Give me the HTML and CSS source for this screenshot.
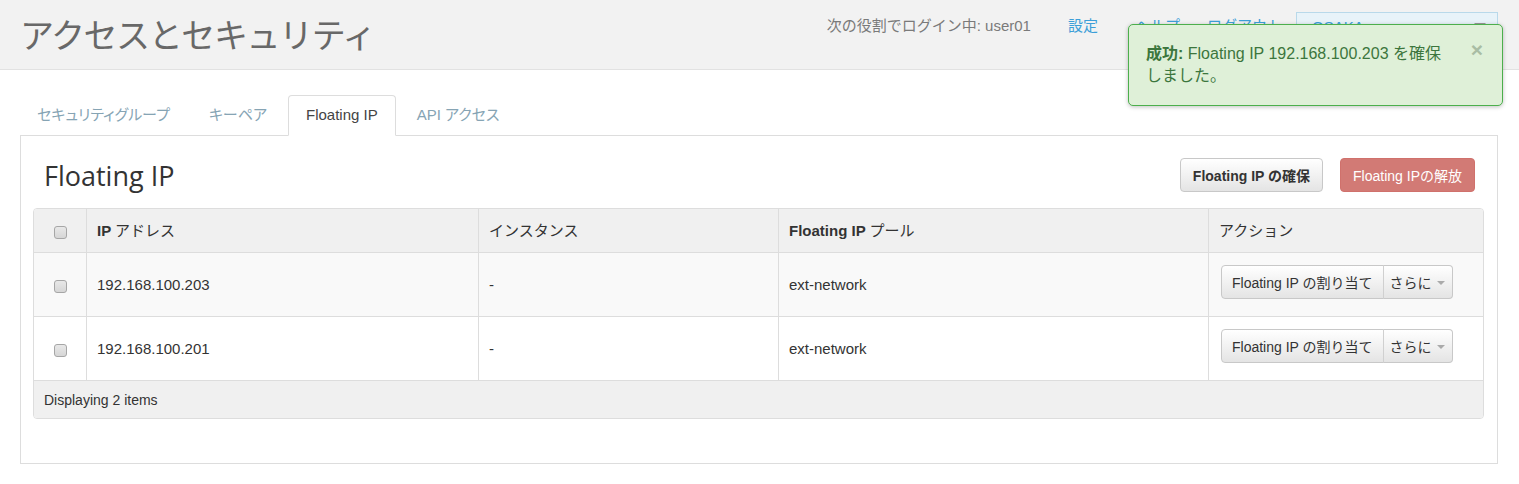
FILE: index.html
```html
<!DOCTYPE html>
<html lang="ja">
<head>
<meta charset="utf-8">
<title>アクセスとセキュリティ</title>
<link rel="stylesheet" href="styles.css">
</head>
<body>
<header class="topbar">
  <h1 class="page-title">アクセスとセキュリティ</h1>
  <nav class="user-nav">
    <span class="login-info">次の役割でログイン中: user01</span>
    <a class="nav-link nav-settings">設定</a>
    <a class="nav-link nav-help">ヘルプ</a>
    <a class="nav-link nav-logout">ログアウト</a>
    <div class="project-select"><span class="project-name">OSAKA</span><span class="caret"></span></div>
  </nav>
</header>

<div class="alert">
  <span class="close">×</span>
  <p class="alert-text"><strong>成功:</strong> Floating IP 192.168.100.203 を確保しました。</p>
</div>

<main class="content">
  <ul class="tabs">
    <li class="tab">セキュリティグループ</li>
    <li class="tab">キーペア</li>
    <li class="tab active">Floating IP</li>
    <li class="tab">API アクセス</li>
  </ul>
  <section class="panel">
    <div class="panel-head">
      <h2 class="panel-title">Floating IP</h2>
      <div class="panel-actions">
        <button class="btn btn-default btn-strong">Floating IP の確保</button>
        <button class="btn btn-danger">Floating IPの解放</button>
      </div>
    </div>
    <table class="data-table">
      <colgroup>
        <col class="c-check"><col class="c-ip"><col class="c-inst"><col class="c-pool"><col class="c-act">
      </colgroup>
      <thead>
        <tr>
          <th class="cell-check"><span class="checkbox"></span></th>
          <th>IP <span class="jp">アドレス</span></th>
          <th><span class="jp">インスタンス</span></th>
          <th>Floating IP <span class="jp">プール</span></th>
          <th><span class="jp">アクション</span></th>
        </tr>
      </thead>
      <tbody>
        <tr class="odd">
          <td class="cell-check"><span class="checkbox"></span></td>
          <td>192.168.100.203</td>
          <td>-</td>
          <td>ext-network</td>
          <td>
            <div class="btn-group">
              <button class="btn btn-default btn-sm">Floating IP の割り当て</button><button class="btn btn-default btn-sm btn-more">さらに<span class="caret small"></span></button>
            </div>
          </td>
        </tr>
        <tr>
          <td class="cell-check"><span class="checkbox"></span></td>
          <td>192.168.100.201</td>
          <td>-</td>
          <td>ext-network</td>
          <td>
            <div class="btn-group">
              <button class="btn btn-default btn-sm">Floating IP の割り当て</button><button class="btn btn-default btn-sm btn-more">さらに<span class="caret small"></span></button>
            </div>
          </td>
        </tr>
      </tbody>
      <tfoot>
        <tr><td colspan="5">Displaying 2 items</td></tr>
      </tfoot>
    </table>
  </section>
</main>
</body>
</html>
```

FILE: styles.css
```css
* { box-sizing: border-box; }
html, body { margin: 0; padding: 0; background: #fff; }
body {
  font-family: "Liberation Sans", Arial, "Noto Sans CJK JP", sans-serif;
  color: #333;
  font-size: 14px;
  position: relative;
}

.topbar {
  display: flex;
  align-items: flex-start;
  height: 70px;
  background: #f2f2f2;
  border-bottom: 1px solid #e2e2e2;
  padding: 0 21px 0 20px;
}
.page-title {
  margin: 0;
  padding-top: 10px;
  font-family: "Noto Sans CJK JP", sans-serif;
  font-weight: 400;
  font-size: 34px;
  letter-spacing: -1.4px;
  line-height: 48px;
  color: #686868;
}
.user-nav {
  margin-left: auto;
  display: flex;
  align-items: flex-start;
  padding-top: 12px;
}
.login-info, .nav-link {
  font-size: 15px;
  line-height: 20px;
  margin-top: 4px;
}
.login-info { color: #7a7a7a; margin-right: 37px; }
.nav-link { color: #3c9fd8; }
.nav-settings { margin-right: 37px; }
.nav-help { margin-right: 27px; }
.nav-logout { margin-right: 14px; }
.project-select {
  width: 202px;
  height: 33px;
  background: #e8f3f9;
  border: 1px solid #b9d9ea;
  display: flex;
  align-items: flex-start;
  justify-content: space-between;
  padding: 4px 11px 0 15px;
  color: #3c9fd8;
  font-size: 15px;
  line-height: 20px;
}
.project-select .caret { margin-top: 6px; }
.caret {
  display: inline-block;
  width: 0; height: 0;
  border-left: 6px solid transparent;
  border-right: 6px solid transparent;
  border-top: 6px solid #999;
}
.caret.small {
  border-left-width: 4px;
  border-right-width: 4px;
  border-top: 4px solid #aaa;
  margin-left: 5px;
  vertical-align: middle;
  margin-top: -2px;
}

.alert {
  position: absolute;
  top: 24px;
  right: 16px;
  width: 375px;
  height: 82px;
  background: #dff0d8;
  border: 1px solid #4caf4c;
  border-radius: 5px;
  box-shadow: 0 1px 4px rgba(0,0,0,0.25);
  padding: 18px 56px 16px 17px;
  color: #3c763d;
}
.alert-text {
  margin: 0;
  font-size: 16px;
  line-height: 22px;
}
.alert-text strong { font-weight: 700; }
.close {
  position: absolute;
  top: 14px;
  right: 19px;
  font-size: 21px;
  font-weight: 700;
  color: #a9bda4;
  line-height: 22px;
}

.content {
  padding: 25px 21px 0 20px;
}
.tabs {
  list-style: none;
  margin: 0;
  padding: 0;
  display: flex;
  height: 40px;
}
.tab {
  padding: 0 17px;
  margin-right: 3px;
  height: 40px;
  line-height: 38px;
  font-size: 15px;
  font-feature-settings: "palt";
  color: #86a4b4;
  border: 1px solid transparent;
  border-radius: 4px 4px 0 0;
}
.tab:first-child { padding-left: 16px; }
.tab.active {
  color: #444;
  background: #fff;
  border-color: #ddd;
  border-bottom-color: #fff;
  height: 41px;
  position: relative;
  z-index: 1;
}
.panel {
  border: 1px solid #ddd;
  padding: 0 13px 44px 12px;
}
.panel-head {
  display: flex;
  align-items: center;
  justify-content: space-between;
  height: 72px;
  padding-left: 11px;
  padding-right: 9px;
}
.panel-title {
  margin: 0;
  font-family: "Open Sans", sans-serif;
  font-weight: 400;
  font-size: 27px;
  color: #333;
  padding-top: 6px;
}
.panel-actions {
  display: flex;
  gap: 17px;
  padding-top: 6px;
}
.btn {
  font-family: "Liberation Sans", Arial, "Noto Sans CJK JP", sans-serif;
  height: 34px;
  border-radius: 4px;
  border: 1px solid #ccc;
  padding: 0 12px;
  font-size: 14px;
  color: #333;
  white-space: nowrap;
}
.btn-default {
  background: linear-gradient(#fff, #e4e4e4);
  border-color: #c8c8c8;
}
.btn-strong { font-weight: 700; }
.btn-danger {
  background: #d27a75;
  border-color: #d0716c;
  color: #fff;
}

.data-table {
  width: 100%;
  border-collapse: separate;
  border-spacing: 0;
  border: 1px solid #ddd;
  border-radius: 4px;
  table-layout: fixed;
}
.c-check { width: 52px; }
.c-ip { width: 392px; }
.c-inst { width: 300px; }
.c-pool { width: 430px; }
.c-act { width: auto; }
.data-table th, .data-table td {
  text-align: left;
  padding: 0 10px;
  border-left: 1px solid #ddd;
  font-size: 15px;
}
.data-table th:first-child, .data-table td:first-child { border-left: none; }
.data-table th {
  height: 43px;
  background: #f0f0f0;
  font-weight: 700;
  padding-bottom: 2px;
}
.data-table th .jp { font-weight: 400; }
.data-table thead th:first-child { border-top-left-radius: 3px; }
.data-table thead th:last-child { border-top-right-radius: 3px; }
.data-table tbody td {
  height: 64px;
  border-top: 1px solid #ddd;
}
.data-table tbody tr.odd td { background: #f9f9f9; }
.data-table .cell-check { text-align: center; padding: 0; }
.checkbox {
  display: inline-block;
  width: 13px; height: 13px;
  border: 1px solid #a6a6a6;
  border-radius: 3px;
  background: linear-gradient(#e8e8e8, #d6d6d6);
  vertical-align: middle;
}
.data-table tfoot td {
  height: 38px;
  background: #f0f0f0;
  border-top: 1px solid #ddd;
  font-size: 14px;
  padding-left: 10px;
  border-radius: 0 0 3px 3px;
}
.btn-group { display: inline-flex; padding-left: 2px; margin-top: -6px; vertical-align: middle; }
.btn-sm { height: 34px; font-size: 14px; }
.btn-group .btn:first-child { border-radius: 4px 0 0 4px; padding: 0 10px; }
.btn-group .btn-more { border-radius: 0 4px 4px 0; border-left: 1px solid #d0d0d0; margin-left: -1px; padding: 0 7px 0 6px; }
```
